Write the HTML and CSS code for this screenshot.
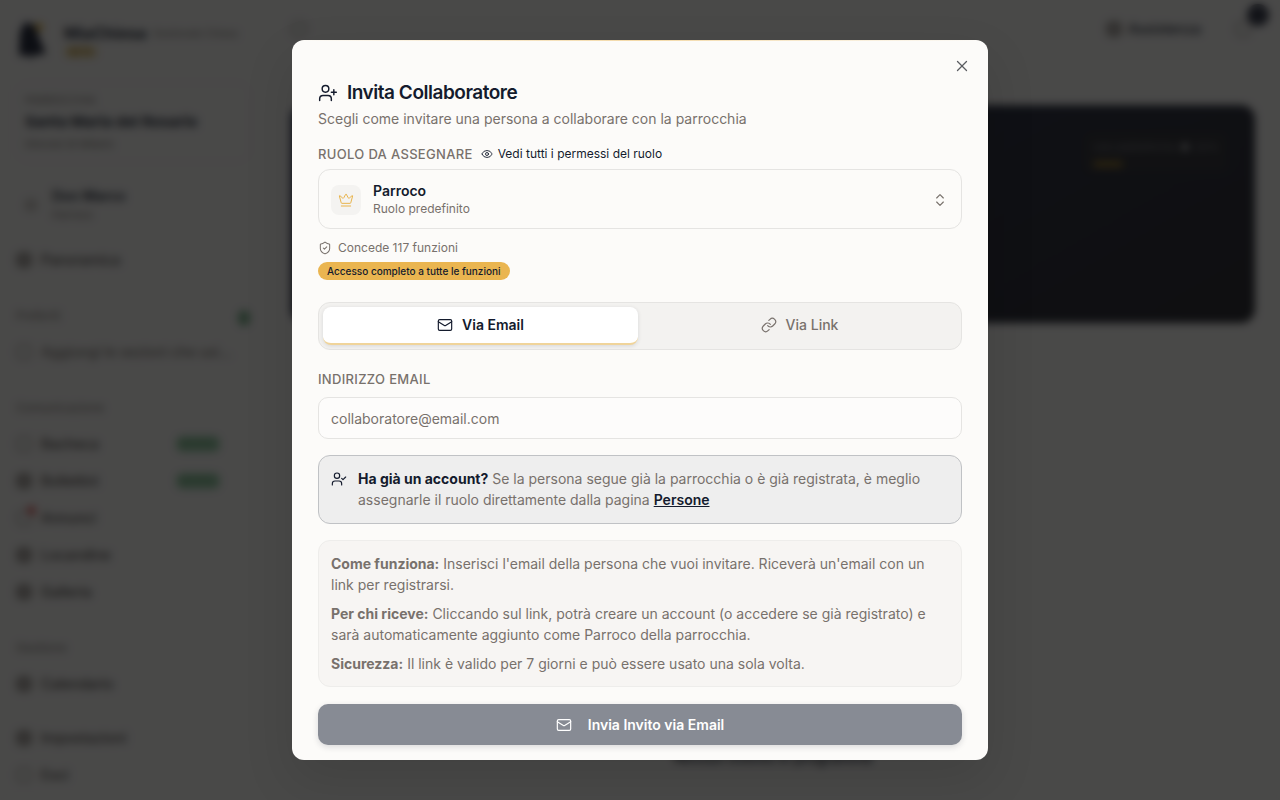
FILE: index.html
```html
<!DOCTYPE html>
<html lang="it">
<head>
  <meta charset="UTF-8">
  <title>Invita Collaboratore</title>
  <meta name="viewport" content="width=device-width, initial-scale=1.0">
  <link rel="stylesheet" href="styles.css">
</head>
<body>
  <div class="app" inert>
    <aside class="sidebar">
      <div class="brand">
        <svg class="brand-logo" viewBox="0 0 32 40"><path d="M9 2l10 3 5 15 6 14-12 1-3 4-3-4-9 1 1-24z" fill="#0c1226"/><circle cx="23" cy="7" r="4" fill="#e5b030"/></svg>
        <div class="brand-text">
          <div class="brand-line"><span class="brand-name">MiaChiesa</span><span class="brand-sub">Gestionale Chiesa</span></div>
          <span class="brand-badge">BETA</span>
        </div>
      </div>

      <div class="parish-card">
        <div class="parish-label">PARROCCHIA</div>
        <div class="parish-name">Santa Maria del Rosario</div>
        <div class="parish-place">Diocesi di Milano</div>
      </div>

      <div class="user">
        <span class="user-avatar"></span>
        <div>
          <div class="user-name">Don Marco</div>
          <div class="user-role">Parroco</div>
        </div>
      </div>

      <nav class="nav">
        <a class="nav-item" href="#"><span class="nav-icon filled"></span>Panoramica</a>
        <div class="nav-title"><span>Preferiti</span><span class="nav-plus"></span></div>
        <a class="nav-item muted" href="#"><span class="nav-icon"></span>Aggiungi le sezioni che usi…</a>
        <div class="nav-title">Comunicazione</div>
        <a class="nav-item" href="#"><span class="nav-icon"></span>Bacheca<span class="nav-badge">NUOVO</span></a>
        <a class="nav-item" href="#"><span class="nav-icon filled"></span>Bollettini<span class="nav-badge">NUOVO</span></a>
        <a class="nav-item" href="#"><span class="nav-icon alert"></span>Annunci</a>
        <a class="nav-item" href="#"><span class="nav-icon filled"></span>Locandine</a>
        <a class="nav-item" href="#"><span class="nav-icon filled"></span>Galleria</a>
        <div class="nav-title">Gestione</div>
        <a class="nav-item" href="#"><span class="nav-icon filled"></span>Calendario</a>
      </nav>

      <div class="nav nav-bottom">
        <a class="nav-item" href="#"><span class="nav-icon filled"></span>Impostazioni</a>
        <a class="nav-item" href="#"><span class="nav-icon"></span>Esci</a>
      </div>
    </aside>

    <main class="main">
      <header class="topbar">
        <span class="nav-icon"></span>
        <span class="help"><span class="nav-icon filled"></span>Assistenza</span>
        <span class="bell"><span class="nav-icon"></span><span class="bell-count"></span></span>
      </header>
      <section class="hero">
        <div class="usage">
          <div class="usage-row"><span>Uso piattaforma</span><span class="usage-dot"></span><span>20%</span></div>
          <div class="usage-bar"></div>
        </div>
      </section>
      <p class="main-note">Nessun evento in programma</p>
    </main>
  </div>

  <div class="overlay">
    <form class="dialog" role="dialog" aria-modal="true" aria-labelledby="dialogTitle" aria-describedby="dialogDesc">
      <button class="close-btn" type="button" aria-label="Chiudi">
        <svg class="icon" viewBox="0 0 24 24"><path d="M18 6 6 18"/><path d="m6 6 12 12"/></svg>
      </button>

      <header class="dialog-header">
        <h2 class="dialog-title" id="dialogTitle">
          <svg class="icon icon-lg" viewBox="0 0 24 24"><path d="M16 21v-2a4 4 0 0 0-4-4H6a4 4 0 0 0-4 4v2"/><circle cx="9" cy="7" r="4"/><path d="M19 8v6"/><path d="M22 11h-6"/></svg>
          Invita Collaboratore
        </h2>
        <p class="dialog-desc" id="dialogDesc">Scegli come invitare una persona a collaborare con la parrocchia</p>
      </header>

      <div class="label-row">
        <label class="field-label" for="role">Ruolo da assegnare</label>
        <button class="perm-btn" type="button">
          <svg class="icon icon-xs" viewBox="0 0 24 24"><path d="M2.062 12.348a1 1 0 0 1 0-.696 10.75 10.75 0 0 1 19.876 0 1 1 0 0 1 0 .696 10.75 10.75 0 0 1-19.876 0"/><circle cx="12" cy="12" r="3"/></svg>
          Vedi tutti i permessi del ruolo
        </button>
      </div>

      <div class="role-card">
        <span class="role-icon">
          <svg class="icon" viewBox="0 0 24 24"><path d="M11.562 3.266a.5.5 0 0 1 .876 0L15.39 8.87a1 1 0 0 0 1.516.294L21.183 5.5a.5.5 0 0 1 .798.519l-2.834 10.246a1 1 0 0 1-.956.734H5.81a1 1 0 0 1-.957-.734L2.02 6.02a.5.5 0 0 1 .798-.519l4.276 3.664a1 1 0 0 0 1.516-.294z"/><path d="M5 21h14"/></svg>
        </span>
        <div class="role-text">
          <select class="role-select" id="role">
            <option>Parroco</option>
          </select>
          <span class="role-kind">Ruolo predefinito</span>
        </div>
        <svg class="icon role-arrows" viewBox="0 0 24 24"><path d="m7 15 5 5 5-5"/><path d="m7 9 5-5 5 5"/></svg>
      </div>

      <div class="grants">
        <svg class="icon icon-sm" viewBox="0 0 24 24"><path d="M20 13c0 5-3.5 7.5-7.66 8.95a1 1 0 0 1-.67-.01C7.5 20.5 4 18 4 13V6a1 1 0 0 1 1-1c2 0 4.5-1.2 6.24-2.72a1.17 1.17 0 0 1 1.52 0C14.51 3.81 17 5 19 5a1 1 0 0 1 1 1z"/><path d="m9 12 2 2 4-4"/></svg>
        Concede 117 funzioni
      </div>
      <span class="access-badge">Accesso completo a tutte le funzioni</span>

      <div class="tabs" role="tablist">
        <button class="tab active" type="button" role="tab" aria-selected="true">
          <svg class="icon" viewBox="0 0 24 24"><rect x="2" y="4" width="20" height="16" rx="2"/><path d="m22 7-8.991 5.727a2 2 0 0 1-2.009 0L2 7"/></svg>
          Via Email
        </button>
        <button class="tab" type="button" role="tab" aria-selected="false">
          <svg class="icon" viewBox="0 0 24 24"><path d="M10 13a5 5 0 0 0 7.54.54l3-3a5 5 0 0 0-7.07-7.07l-1.72 1.71"/><path d="M14 11a5 5 0 0 0-7.54-.54l-3 3a5 5 0 0 0 7.07 7.07l1.71-1.71"/></svg>
          Via Link
        </button>
      </div>

      <label class="field-label" for="email">Indirizzo email</label>
      <input class="email-input" id="email" type="email" placeholder="collaboratore@email.com">

      <div class="account-note">
        <svg class="icon" viewBox="0 0 24 24"><path d="M16 21v-2a4 4 0 0 0-4-4H6a4 4 0 0 0-4 4v2"/><circle cx="9" cy="7" r="4"/><path d="m16 11 2 2 4-4"/></svg>
        <p><strong>Ha già un account?</strong> Se la persona segue già la parrocchia o è già registrata, è meglio assegnarle il ruolo direttamente dalla pagina <a href="#">Persone</a></p>
      </div>

      <div class="info-box">
        <p><strong>Come funziona:</strong> Inserisci l'email della persona che vuoi invitare. Riceverà un'email con un link per registrarsi.</p>
        <p><strong>Per chi riceve:</strong> Cliccando sul link, potrà creare un account (o accedere se già registrato) e sarà automaticamente aggiunto come Parroco della parrocchia.</p>
        <p><strong>Sicurezza:</strong> Il link è valido per 7 giorni e può essere usato una sola volta.</p>
      </div>

      <button class="submit-btn" type="submit" disabled>
        <svg class="icon" viewBox="0 0 24 24"><rect x="2" y="4" width="20" height="16" rx="2"/><path d="m22 7-8.991 5.727a2 2 0 0 1-2.009 0L2 7"/></svg>
        Invia Invito via Email
      </button>
    </form>
  </div>
</body>
</html>
```
FILE: styles.css
```css
* {
  box-sizing: border-box;
}

body {
  margin: 0;
  background: #faf9f7;
  color: #141b2d;
  font-family: Inter, "Liberation Sans", sans-serif;
  font-size: 14px;
  line-height: 20px;
}

h2, p {
  margin: 0;
}

button, input, select {
  font: inherit;
  color: inherit;
}

button {
  cursor: pointer;
}

.icon {
  width: 16px;
  height: 16px;
  flex-shrink: 0;
  fill: none;
  stroke: currentColor;
  stroke-width: 1.75;
  stroke-linecap: round;
  stroke-linejoin: round;
}

.icon-lg {
  width: 20px;
  height: 20px;
}

.icon-sm {
  width: 14px;
  height: 14px;
}

.icon-xs {
  width: 12px;
  height: 12px;
}

/* page behind the dialog */
.app {
  display: flex;
  height: 100vh;
  overflow: hidden;
}

.sidebar {
  display: flex;
  flex-direction: column;
  width: 266px;
  padding: 20px 16px 8px;
}

.brand {
  display: flex;
  gap: 16px;
}

.brand-logo {
  width: 32px;
  height: 40px;
}

.brand-line {
  display: flex;
  align-items: center;
  gap: 6px;
  height: 26px;
  white-space: nowrap;
}

.brand-name {
  font-size: 16px;
  font-weight: 700;
}

.brand-sub {
  color: #78716c;
  font-size: 10px;
}

.brand-badge {
  display: block;
  width: 34px;
  border-radius: 6px;
  background: #efdca8;
  color: #a87a10;
  font-size: 9px;
  font-weight: 700;
  line-height: 12px;
  text-align: center;
}

.parish-card {
  margin-top: 22px;
  padding: 8px;
  border: 1px solid #f0eeea;
  border-radius: 12px;
}

.parish-label,
.parish-place,
.user-role {
  color: #78716c;
  font-size: 11px;
  line-height: 18px;
}

.parish-name {
  padding: 3px 0;
  font-size: 15px;
  font-weight: 700;
}

.user {
  display: flex;
  align-items: center;
  gap: 14px;
  margin-top: 24px;
  padding-left: 8px;
}

.user-avatar {
  width: 14px;
  height: 14px;
  border-radius: 50%;
  background: #cfcbc6;
}

.user-name {
  font-weight: 600;
}

.nav {
  display: flex;
  flex-direction: column;
  gap: 2px;
  margin-top: 18px;
}

.nav-bottom {
  margin-top: auto;
}

.nav-item {
  display: flex;
  align-items: center;
  gap: 9px;
  height: 35px;
  color: #44403c;
  font-weight: 500;
  text-decoration: none;
  white-space: nowrap;
}

.nav-item.muted {
  color: #78716c;
}

.nav-icon {
  position: relative;
  width: 16px;
  height: 16px;
  border: 2px solid #b0aaa4;
  border-radius: 6px;
}

.nav-icon.filled {
  border-color: #8c8782;
  background: #a8a29e;
}

.nav-icon.alert::after {
  content: "";
  position: absolute;
  top: -6px;
  right: -6px;
  width: 9px;
  height: 9px;
  border-radius: 50%;
  background: #e25555;
}

.nav-badge {
  width: 44px;
  margin-left: auto;
  margin-right: 30px;
  border-radius: 6px;
  background: #92cba2;
  color: #4c9560;
  font-size: 9px;
  line-height: 16px;
  text-align: center;
}

.nav-title {
  display: flex;
  align-items: flex-end;
  justify-content: space-between;
  height: 53px;
  padding-bottom: 6px;
  color: #78716c;
  font-size: 12px;
}

.nav-plus {
  width: 12px;
  height: 16px;
  border-radius: 6px;
  background: #6faa80;
}

.main {
  display: flex;
  flex: 1;
  flex-direction: column;
  padding: 0 25px 32px;
}

.topbar {
  display: flex;
  align-items: center;
  gap: 34px;
  height: 58px;
  padding-right: 4px;
}

.help {
  display: flex;
  align-items: center;
  gap: 6px;
  margin-left: auto;
  font-weight: 500;
}

.bell {
  display: flex;
  position: relative;
}

.bell-count {
  position: absolute;
  top: -17px;
  left: 12px;
  width: 22px;
  height: 22px;
  border-radius: 50%;
  background: #23283a;
}

.hero {
  display: flex;
  align-items: flex-start;
  justify-content: flex-end;
  height: 218px;
  margin-top: 47px;
  padding: 26px;
  border-radius: 14px;
  background: linear-gradient(150deg, #172042, #14151c);
}

.usage {
  width: 146px;
  padding: 6px 10px;
  border-radius: 8px;
  background: #1c1d24;
  color: #74747c;
  font-size: 11px;
}

.usage-row {
  display: flex;
  align-items: center;
  justify-content: space-between;
}

.usage-dot {
  width: 8px;
  height: 8px;
  border-radius: 50%;
  background: #a3a3a8;
}

.usage-bar {
  width: 30px;
  height: 6px;
  margin-top: 4px;
  border-radius: 3px;
  background: #8a6a18;
}

.main-note {
  margin-top: auto;
  font-weight: 600;
  text-align: center;
}

/* dialog */
.overlay {
  position: fixed;
  inset: 0;
  display: flex;
  align-items: center;
  justify-content: center;
  padding: 16px;
  background: rgba(13, 13, 14, 0.75);
  backdrop-filter: blur(4px);
}

.dialog {
  position: relative;
  display: flex;
  flex-direction: column;
  width: 100%;
  max-width: 696px;
  max-height: 90vh;
  padding: 39px 26px 26px;
  overflow-y: auto;
  scrollbar-width: none;
  border-radius: 12px;
  background: #fcfbf9;
  box-shadow: 0 20px 50px rgba(0, 0, 0, 0.12);
}

.dialog > * {
  flex-shrink: 0;
}

.dialog::before {
  content: "";
  position: absolute;
  top: 0;
  left: 0;
  right: 0;
  height: 1px;
  background: linear-gradient(90deg, transparent, #f3d9a8, transparent);
}

.close-btn {
  position: absolute;
  top: 17px;
  right: 17px;
  display: flex;
  padding: 0;
  border: 0;
  background: none;
  color: #5b5c61;
}

.close-btn .icon {
  width: 18px;
  height: 18px;
}

.dialog-title {
  display: flex;
  align-items: center;
  gap: 9px;
  font-size: 19px;
  font-weight: 600;
  line-height: 28px;
  letter-spacing: -0.025em;
}

.dialog-desc {
  margin-top: 2px;
  color: #78716c;
  font-size: 14px;
}

.label-row {
  display: flex;
  align-items: center;
  gap: 8px;
  margin-top: 15px;
}

.field-label {
  color: #78716c;
  font-size: 13px;
  font-weight: 500;
  letter-spacing: 0.025em;
  text-transform: uppercase;
}

.perm-btn {
  display: flex;
  align-items: center;
  gap: 5px;
  padding: 0;
  border: 0;
  background: none;
  font-size: 12px;
}

.role-card {
  display: flex;
  align-items: center;
  gap: 12px;
  height: 60px;
  margin-top: 5px;
  padding: 1px 13px 0 12px;
  border: 1px solid #e5e4e2;
  border-radius: 12px;
}

.role-icon {
  display: flex;
  padding: 7px;
  border-radius: 8px;
  background: #f4f3f1;
  color: #e9b44c;
}

.role-icon .icon {
  stroke-width: 1.5;
}

.role-text {
  display: flex;
  flex: 1;
  flex-direction: column;
}

.role-select {
  padding: 0;
  border: 0;
  background: none;
  appearance: none;
  font-weight: 600;
  line-height: 18px;
}

.role-kind {
  color: #78716c;
  font-size: 12px;
  line-height: 18px;
}

.role-arrows {
  color: #78716c;
}

.grants {
  display: flex;
  align-items: center;
  gap: 6px;
  margin-top: 9px;
  color: #78716c;
  font-size: 12px;
}

.access-badge {
  align-self: flex-start;
  margin-top: 4px;
  padding: 0 9px;
  border-radius: 9px;
  background: #eab550;
  font-size: 10px;
  font-weight: 500;
  line-height: 18px;
}

.tabs {
  display: grid;
  grid-template-columns: 1fr 1fr;
  gap: 4px;
  margin: 22px 0 19px;
  padding: 4px;
  border: 1px solid #e5e4e2;
  border-radius: 12px;
  background: #f3f2f0;
}

.tab {
  display: flex;
  align-items: center;
  justify-content: center;
  gap: 9px;
  height: 38px;
  padding: 0;
  border: 0;
  border-bottom: 2px solid transparent;
  border-radius: 8px;
  background: none;
  color: #78716c;
  font-weight: 500;
}

.tab.active {
  border-bottom-color: #f0d49a;
  background: #fff;
  box-shadow: 0 1px 4px rgba(20, 27, 45, 0.12);
  color: #141b2d;
  font-weight: 600;
}

.email-input {
  height: 42px;
  margin-top: 8px;
  padding: 0 12px;
  border: 1px solid #e5e4e2;
  border-radius: 10px;
  background: #fdfcfb;
}

.email-input::placeholder {
  color: #78716c;
}

.account-note {
  display: flex;
  gap: 11px;
  margin-top: 16px;
  padding: 12px 12px 13px;
  border: 1px solid #c0c2c5;
  border-radius: 12px;
  background: #eeeeee;
  color: #78716c;
  line-height: 21px;
}

.account-note .icon {
  margin-top: 3px;
  color: #141b2d;
}

.account-note strong,
.account-note a {
  color: #141b2d;
  font-weight: 700;
}

.account-note a {
  font-weight: 600;
}

.info-box {
  display: flex;
  flex-direction: column;
  gap: 8px;
  margin-top: 16px;
  padding: 12px;
  border: 1px solid #eeedeb;
  border-radius: 12px;
  background: #f7f5f3;
  color: #78716c;
  line-height: 21px;
}

.submit-btn {
  display: flex;
  align-items: center;
  justify-content: center;
  gap: 16px;
  height: 41px;
  margin-top: 17px;
  border: 0;
  border-radius: 10px;
  background: #878b94;
  box-shadow: 0 2px 6px rgba(20, 27, 45, 0.15);
  color: #fff;
  font-weight: 600;
}
```
